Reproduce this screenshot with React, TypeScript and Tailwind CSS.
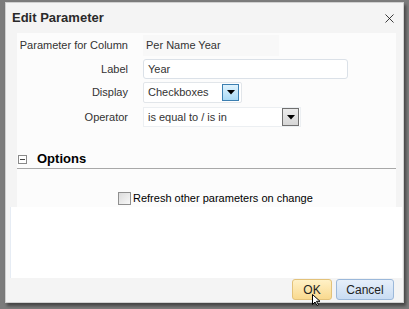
import { X } from "lucide-react";

const font = { fontFamily: '"Liberation Sans", Arial, sans-serif' };

function Arrow() {
  return (
    <svg width="8" height="5" viewBox="0 0 8 5">
      <path d="M0 0h8L4 4.5z" fill="#000" />
    </svg>
  );
}

export default function App() {
  return (
    <div
      className="w-[409px] h-[309px] bg-[#7c7c7c] pt-[2px] pl-[5px] text-[11px] text-[#222]"
      style={font}
    >
      <div className="relative w-[399px] h-[301px] bg-[#f4f4f4] border border-[#d0d0d0] shadow-[2px_3px_3px_rgba(0,0,0,0.45)] flex flex-col">
        {/* Header */}
        <div className="h-[30px] flex items-center justify-between pl-[6px] pr-[6px]">
          <span className="text-[13px] font-bold text-[#2a2a2a]">Edit Parameter</span>
          <X size={15} strokeWidth={1.3} className="text-[#111]" />
        </div>

        {/* Form panel */}
        <div className="ml-[11px] mr-[7px] h-[174px] bg-[#fcfcfc] flex flex-col">
          <div className="mt-[2px] h-[21px] flex items-center">
            <div className="w-[111px] text-right text-[#333]">Parameter for Column</div>
            <div className="ml-[15px] w-[136px] h-[21px] flex items-center pl-[3px] bg-[#f8f8f8] text-[#333]">
              Per Name Year
            </div>
          </div>
          <div className="mt-[3px] h-[20px] flex items-center">
            <div className="w-[111px] text-right text-[#333]">Label</div>
            <div className="ml-[15px] w-[205px] h-[20px] flex items-center pl-[4px] border border-[#dbe1e8] rounded-[3px] bg-white text-[#333]">
              Year
            </div>
          </div>
          <div className="mt-[3px] h-[21px] flex items-center">
            <div className="w-[111px] text-right text-[#333]">Display</div>
            <div className="ml-[15px] w-[99px] h-[21px] flex items-center justify-between pl-[4px] pr-[2px] border border-[#e2e6ea] rounded-[2px] bg-white text-[#333]">
              <span>Checkboxes</span>
              <div className="w-[17px] h-[17px] border border-[#3c7fb1] bg-gradient-to-b from-[#e0f3fd] to-[#a9daf6] flex items-center justify-center">
                <Arrow />
              </div>
            </div>
          </div>
          <div className="mt-[4px] h-[20px] flex items-center">
            <div className="w-[111px] text-right text-[#333]">Operator</div>
            <div className="ml-[15px] w-[158px] h-[20px] flex items-center justify-between pl-[4px] pr-[1px] border border-[#eceff2] bg-white text-[#333]">
              <span>is equal to / is in</span>
              <div className="w-[17px] h-[18px] border border-[#707070] bg-gradient-to-b from-[#ececec] to-[#d6d6d6] flex items-center justify-center">
                <Arrow />
              </div>
            </div>
          </div>

          {/* Options */}
          <div className="mt-[24px] h-[18px] flex items-center border-b border-[#a8a8a8] pb-[1px]">
            <div className="ml-[1px] w-[9px] h-[9px] border border-[#8a8a8a] bg-white flex items-center justify-center">
              <div className="w-[5px] h-[1px] bg-[#444]" />
            </div>
            <span className="ml-[10px] text-[13px] font-bold text-black">Options</span>
          </div>
          <div className="mt-[22px] h-[14px] flex items-center pl-[101px]">
            <div className="w-[13px] h-[13px] border border-[#8f8f8f] bg-gradient-to-br from-[#dcdcdc] to-[#f8f8f8]" />
            <span className="ml-[2px] text-black">Refresh other parameters on change</span>
          </div>
        </div>

        {/* Blank area */}
        <div className="ml-[4px] mr-[1px] h-[71px] bg-white border-l border-[#e6ecf4]" />

        {/* Footer */}
        <div className="flex-1 flex items-center justify-end gap-[4px] pr-[9px] pb-[1px]">
          <button className="w-[40px] h-[21px] rounded-[3px] border border-[#e3c27a] bg-gradient-to-b from-[#fff1c6] to-[#f9d98e] text-[12px] text-[#222]">
            OK
          </button>
          <button className="w-[58px] h-[21px] rounded-[3px] border border-[#9bb8da] bg-gradient-to-b from-[#e6effa] to-[#c9dcf3] text-[12px] text-[#222]">
            Cancel
          </button>
        </div>

        {/* mouse pointer */}
        <svg className="absolute left-[306px] top-[291px]" width="9" height="12" viewBox="0 0 9 12">
          <path d="M0.5 0.5v10l2.5-2.5 2 3.5 1.5-.8-2-3.4h3.5z" fill="#fff" stroke="#000" strokeWidth="1" />
        </svg>
      </div>
    </div>
  );
}
